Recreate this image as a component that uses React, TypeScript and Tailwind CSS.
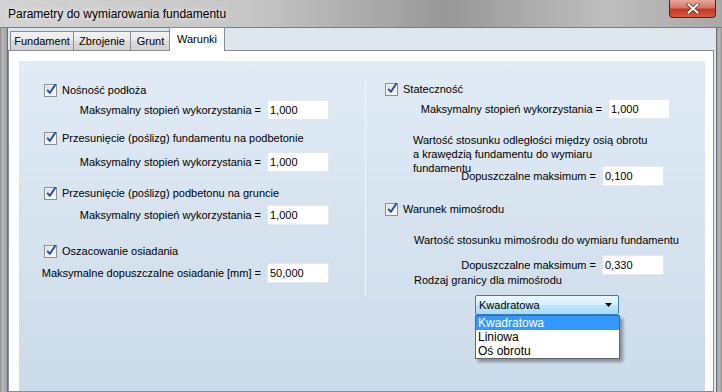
const Check = () => (
  <span className="relative inline-block w-[13px] h-[13px] shrink-0 border border-[#8e8f8f] bg-[linear-gradient(135deg,#d6d9dc,#ffffff)] shadow-[inset_0_0_0_1px_#f4f4f4]">
    <svg
      className="absolute left-[0px] top-[-2px] overflow-visible"
      width="13"
      height="13"
      viewBox="0 0 13 13"
    >
      <path d="M2.2 6.8 L4.9 9.8 L10.6 1.2" stroke="#2a4da3" strokeWidth="2" fill="none" strokeLinejoin="round" />
    </svg>
  </span>
)

const CheckRow = ({ label, className }: { label: string; className?: string }) => (
  <div className={`flex h-[13px] items-center gap-[5px] ${className ?? ''}`}>
    <Check />
    <span className="leading-[13px] text-[11px] text-black">{label}</span>
  </div>
)

const Field = ({ value }: { value: string }) => (
  <div className="flex h-[20px] w-[62px] shrink-0 items-center border border-[#e2e8ee] bg-white pl-[2px] text-[11px] text-black">
    {value}
  </div>
)

const FieldRow = ({ label, value, className }: { label: string; value: string; className?: string }) => (
  <div className={`flex h-[20px] items-center justify-end gap-[6px] ${className ?? ''}`}>
    <span className="whitespace-nowrap text-[11px] text-black">{label}</span>
    <Field value={value} />
  </div>
)

const Tab = ({ label, w }: { label: string; w: string }) => (
  <div
    className={`${w} mt-[4px] flex h-[19px] items-center justify-center border border-b-0 border-[#898c95] bg-[linear-gradient(#f2f2f2,#ebebeb_45%,#dddddd_50%,#cfcfcf)] text-[11px] text-black -ml-px first:ml-0`}
  >
    {label}
  </div>
)

const App = () => {
  return (
    <div className="flex h-[392px] w-[722px] flex-col overflow-hidden bg-[#dfe7ee] font-['Liberation_Sans',Arial,sans-serif]">
      {/* title bar */}
      <div className="relative flex h-[28px] shrink-0 items-center border-b border-[#7d7d7d] bg-[linear-gradient(90deg,#d3d3d3_0%,#c6c6c6_35%,#989898_62%,#bebebe_84%,#a8a8a8_100%)] pl-[8px]">
        <span className="text-[12px] text-black [text-shadow:0_0_6px_#ffffff]">
          Parametry do wymiarowania fundamentu
        </span>
        <div className="absolute right-[6px] top-0 flex h-[18px] w-[47px] items-center justify-center rounded-b-[4px] border border-t-0 border-[#5e1f16] bg-[linear-gradient(#e6a89a,#d47766_45%,#c33a25_55%,#d25a40)]">
          <svg width="14" height="11" viewBox="0 0 14 11">
            <path d="M2.5 1.5 L11.5 9.5 M11.5 1.5 L2.5 9.5" stroke="#6b2a20" strokeWidth="3.4" strokeLinecap="square" />
            <path d="M2.5 1.5 L11.5 9.5 M11.5 1.5 L2.5 9.5" stroke="#ffffff" strokeWidth="2" strokeLinecap="square" />
          </svg>
        </div>
      </div>

      <div className="flex min-h-0 flex-1">
        {/* left frame */}
        <div className="w-[8px] shrink-0 border-r border-[#6e6e6e] bg-[linear-gradient(90deg,#8a8a8a,#b8b8b8_30%,#a2a2a2)]" />

        {/* client */}
        <div className="flex min-w-0 flex-1 flex-col">
          {/* tab strip */}
          <div className="flex h-[22px] shrink-0 items-end pl-[2px]">
            <Tab label="Fundament" w="w-[64px]" />
            <Tab label="Zbrojenie" w="w-[58px]" />
            <Tab label="Grunt" w="w-[41px]" />
            <div className="relative z-10 -ml-[2px] flex h-[24px] w-[56px] translate-y-px items-start justify-center border border-b-0 border-[#898c95] bg-white pt-[3px] text-[11px] text-black">
              Warunki
            </div>
          </div>

          {/* tab page */}
          <div className="mr-[2px] flex min-h-0 flex-1 flex-col border border-[#898c95] bg-white pl-[10px] pr-[8px] pt-[10px]">
            <div className="flex min-h-0 flex-1 bg-[linear-gradient(#e0ebf5,#ccdbe9)]">
              {/* left column */}
              <div className="flex w-[346px] shrink-0 flex-col pl-[25px] pt-[23px]">
                <CheckRow label="Nośność podłoża" />
                <FieldRow className="mt-[3px] w-[285px]" label="Maksymalny stopień wykorzystania =" value="1,000" />
                <CheckRow className="mt-[12px]" label="Przesunięcie (poślizg) fundamentu na podbetonie" />
                <FieldRow className="mt-[7px] w-[285px]" label="Maksymalny stopień wykorzystania =" value="1,000" />
                <CheckRow className="mt-[15px]" label="Przesunięcie (poślizg) podbetonu na gruncie" />
                <FieldRow className="mt-[5px] w-[285px]" label="Maksymalny stopień wykorzystania =" value="1,000" />
                <CheckRow className="mt-[20px]" label="Oszacowanie osiadania" />
                <FieldRow className="mt-[5px] w-[285px]" label="Maksymalne dopuszczalne osiadanie [mm] =" value="50,000" />
              </div>

              {/* separator */}
              <div className="mt-[19px] h-[217px] w-px shrink-0 bg-[#f3f7fa]" />

              {/* right column */}
              <div className="flex flex-1 flex-col pl-[19px] pt-[22px]">
                <CheckRow label="Stateczność" />
                <FieldRow className="mt-[3px] w-[285px]" label="Maksymalny stopień wykorzystania =" value="1,000" />
                <p className="ml-[28px] mt-[14px] text-[11px] leading-[14px] text-black">
                  Wartość stosunku odległości między osią obrotu
                  <br />a krawędzią fundamentu do wymiaru
                  <br />fundamentu
                </p>
                <FieldRow className="relative mt-[-9px] w-[279px]" label="Dopuszczalne maksimum =" value="0,100" />
                <CheckRow className="mt-[17px]" label="Warunek mimośrodu" />
                <p className="ml-[29px] mt-[17px] text-[11px] leading-[14px] text-black">
                  Wartość stosunku mimośrodu do wymiaru fundamentu
                </p>
                <FieldRow className="mt-[8px] w-[279px]" label="Dopuszczalne maksimum =" value="0,330" />
                <p className="ml-[29px] mt-[-2px] text-[11px] leading-[14px] text-black">Rodzaj granicy dla mimośrodu</p>

                {/* combo */}
                <div className="relative ml-[90px] mt-[8px] w-[144px]">
                  <div className="flex h-[20px] items-center justify-between rounded-[2px] border border-[#3c7fb1] bg-[linear-gradient(#eaf6fd,#d9f0fc_50%,#bee6fd_51%,#a7d9f5)] pl-[3px] pr-[6px] text-[11px] text-black">
                    <span>Kwadratowa</span>
                    <svg width="7" height="4" viewBox="0 0 7 4">
                      <polygon points="0,0 7,0 3.5,4" fill="#000000" />
                    </svg>
                  </div>
                  <div className="absolute left-0 top-[20px] z-20 w-[145px] border border-[#646464] bg-white shadow-[3px_3px_3px_rgba(0,0,0,0.35)]">
                    <div className="h-[14px] bg-[#3399ff] pl-[2px] text-[12px] leading-[14px] text-white">Kwadratowa</div>
                    <div className="h-[14px] pl-[2px] text-[12px] leading-[14px] text-black">Liniowa</div>
                    <div className="h-[14px] pl-[2px] text-[12px] leading-[14px] text-black">Oś obrotu</div>
                  </div>
                </div>
              </div>
            </div>
          </div>
        </div>

        {/* right frame */}
        <div className="w-[6px] shrink-0 border-l border-[#6e6e6e] bg-[linear-gradient(90deg,#a2a2a2,#b8b8b8_60%,#8a8a8a)]" />
      </div>
    </div>
  )
}

export default App
